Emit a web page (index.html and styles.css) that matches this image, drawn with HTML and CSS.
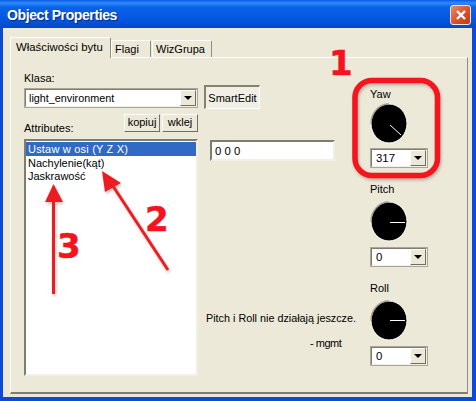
FILE: index.html
```html
<!DOCTYPE html>
<html lang="en">
<head>
  <meta charset="UTF-8" />
  <title>Object Properties</title>
  <link rel="stylesheet" href="styles.css">
</head>
<body>
  <div class="window">
    <div class="titlebar">
      <span class="title">Object Properties</span>
      <span class="close">
        <svg width="12" height="12" viewBox="0 0 12 12"><path d="M2 2 L10 10 M10 2 L2 10" stroke="#fff" stroke-width="2.4" fill="none"/></svg>
      </span>
    </div>

    <div class="client">
      <div class="tabs">
        <div class="tab active">Właściwości bytu</div>
        <div class="tab tab-flagi">Flagi</div>
        <div class="tab tab-wiz">WizGrupa</div>
      </div>

      <div class="panel">
        <div class="main">
          <div class="label klasa">Klasa:</div>
          <div class="class-row">
            <div class="combo combo-class">
              <span class="combo-value">light_environment</span>
              <span class="combo-btn"><i class="arrow"></i></span>
            </div>
            <div class="smart">SmartEdit</div>
          </div>

          <div class="attrs">
            <div class="attrs-left">
              <div class="attrs-head">
                <span class="label">Attributes:</span>
                <span class="buttons">
                  <span class="btn">kopiuj</span>
                  <span class="btn">wklej</span>
                </span>
              </div>
              <div class="list">
                <div class="row selected">Ustaw w osi (Y Z X)</div>
                <div class="row">Nachylenie(kąt)</div>
                <div class="row">Jaskrawość</div>
              </div>
            </div>
            <div class="attrs-right">
              <div class="value">0 0 0</div>
              <div class="note">Pitch i Roll nie działają jeszcze.</div>
              <div class="sign">- mgmt</div>
            </div>
          </div>
        </div>

        <div class="dials">
          <div class="dial-group yaw">
            <div class="label">Yaw</div>
            <svg class="dial" width="38" height="41" viewBox="0 0 38 41">
              <ellipse cx="19" cy="20.5" rx="18" ry="19.5" fill="#000" stroke="#fff" stroke-width="1"/>
              <path d="M1 20.5 A18 19.5 0 0 1 19 1" fill="none" stroke="#9d9a8c" stroke-width="1.4"/>
              <path d="M20 22 L31 32" stroke="#fff"/>
            </svg>
            <div class="combo combo-dial">
              <span class="combo-value">317</span>
              <span class="combo-btn"><i class="arrow"></i></span>
            </div>
          </div>
          <div class="dial-group">
            <div class="label">Pitch</div>
            <svg class="dial" width="38" height="41" viewBox="0 0 38 41">
              <ellipse cx="19" cy="20.5" rx="18" ry="19.5" fill="#000" stroke="#fff" stroke-width="1"/>
              <path d="M1 20.5 A18 19.5 0 0 1 19 1" fill="none" stroke="#9d9a8c" stroke-width="1.4"/>
              <path d="M20 21.5 L35 21.5" stroke="#fff"/>
            </svg>
            <div class="combo combo-dial">
              <span class="combo-value">0</span>
              <span class="combo-btn"><i class="arrow"></i></span>
            </div>
          </div>
          <div class="dial-group">
            <div class="label">Roll</div>
            <svg class="dial" width="38" height="41" viewBox="0 0 38 41">
              <ellipse cx="19" cy="20.5" rx="18" ry="19.5" fill="#000" stroke="#fff" stroke-width="1"/>
              <path d="M1 20.5 A18 19.5 0 0 1 19 1" fill="none" stroke="#9d9a8c" stroke-width="1.4"/>
              <path d="M20 20.5 L35 20.5" stroke="#fff"/>
            </svg>
            <div class="combo combo-dial">
              <span class="combo-value">0</span>
              <span class="combo-btn"><i class="arrow"></i></span>
            </div>
          </div>
        </div>
      </div>
    </div>
  </div>

  <!-- red annotations drawn over the dialog -->
  <svg class="marks" width="476" height="401" viewBox="0 0 476 401">
    <defs>
      <filter id="soft" x="-20%" y="-20%" width="150%" height="150%">
        <feDropShadow dx="1" dy="2" stdDeviation="1.5" flood-color="#000" flood-opacity="0.25"/>
      </filter>
    </defs>
    <g filter="url(#soft)">
      <rect x="355" y="80.5" width="82.5" height="95" rx="17" fill="none" stroke="#f3141e" stroke-width="5.5"/>
      <path d="M168 270 L111 183" stroke="#ec1c24" stroke-width="3" fill="none"/>
      <path d="M102 171 L121 183 L105 192 Z" fill="#ec1c24"/>
      <path d="M53.5 294 L53.5 200" stroke="#ec1c24" stroke-width="3" fill="none"/>
      <path d="M53.5 184 L63 202 L45 202 Z" fill="#ec1c24"/>
    </g>
  </svg>
  <span class="num num-1">1</span>
  <span class="num num-2">2</span>
  <span class="num num-3">3</span>
</body>
</html>
```

FILE: styles.css
```css
body {
  margin: 0;
  padding: 0;
  font-family: "Liberation Sans", Arial, sans-serif;
  font-size: 11px;
  color: #000;
  overflow: hidden;
}

.window {
  width: 476px;
  height: 401px;
  box-sizing: border-box;
  display: flex;
  flex-direction: column;
  background: #0a4bd8;
  padding: 0 4px 4px 3px;
}

/* Title bar */
.titlebar {
  height: 28px;
  flex: none;
  box-sizing: border-box;
  margin: 0 -4px 0 -3px;
  padding: 1px 5px 0 7px;
  display: flex;
  align-items: center;
  justify-content: space-between;
  background: linear-gradient(to bottom, #0a5ae6 0, #2f8cf8 3px, #0a62e8 7px, #0355e0 20px, #0348c8 28px);
}
.title {
  color: #fff;
  font-weight: bold;
  font-size: 14px;
  letter-spacing: -0.4px;
  text-shadow: 1px 1px 1px #0a2a80;
}
.close {
  width: 21px;
  height: 20px;
  box-sizing: border-box;
  border: 1px solid #f0e8e0;
  border-radius: 3px;
  background: linear-gradient(135deg, #e88a68, #d8502c 55%, #c03a18);
  display: flex;
  align-items: center;
  justify-content: center;
}

/* Dialog body */
.client {
  flex: 1;
  background: #ece9d8;
  padding: 9px 4px 3px 7px;
  display: flex;
  flex-direction: column;
  min-height: 0;
}

/* Tabs */
.tabs {
  display: flex;
  align-items: flex-end;
  height: 20px;
  flex: none;
  position: relative;
  z-index: 1;
}
.tab {
  box-sizing: border-box;
  height: 17px;
  background: #ece9d8;
  border: 1px solid #fff;
  border-bottom: none;
  border-right: 1px solid #8f8d80;
  border-radius: 2px 2px 0 0;
  padding: 2px 0 0 3px;
  font-size: 11px;
}
.tab.active {
  height: 21px;
  width: 101px;
  margin-bottom: -1px;
  padding: 3px 0 0 5px;
  font-size: 11.4px;
}
.tab-flagi {
  width: 40px;
}
.tab-wiz {
  width: 60px;
  margin-left: 1px;
}

.panel {
  flex: 1;
  min-height: 0;
  box-sizing: border-box;
  border: 1px solid #fff;
  border-right: 1px solid #8f8d80;
  border-bottom: 2px solid #7f7d70;
  display: flex;
  padding: 0 0 0 13px;
}

.label {
  font-size: 11px;
  line-height: 13px;
}

/* Left and middle area */
.main {
  width: 345px;
  display: flex;
  flex-direction: column;
}
.klasa {
  margin-top: 14px;
}
.class-row {
  display: flex;
  margin-top: 3px;
  gap: 6px;
  align-items: flex-start;
}

.combo {
  box-sizing: border-box;
  display: flex;
  align-items: center;
  justify-content: space-between;
  background: #fff;
  border: 2px solid;
  border-color: #7f7d70 #f2f0e6 #f2f0e6 #7f7d70;
  outline: 1px solid #a8a698;
  outline-offset: -1px;
}
.combo-class {
  width: 174px;
  height: 20px;
}
.combo-value {
  padding-left: 3px;
  font-size: 10.8px;
}
.combo-dial .combo-value {
  padding-left: 4px;
  font-size: 11.4px;
}
.combo-btn {
  width: 16px;
  height: 16px;
  background: #ece9d8;
  border: 1px solid;
  border-color: #fff #716f64 #716f64 #fff;
  box-sizing: border-box;
  display: flex;
  align-items: center;
  justify-content: center;
}
.arrow {
  width: 0;
  height: 0;
  border-left: 4px solid transparent;
  border-right: 4px solid transparent;
  border-top: 4px solid #000;
}

.smart {
  box-sizing: border-box;
  width: 56px;
  height: 24px;
  margin-top: -3px;
  border: 1px solid #fff;
  border-top: 2px solid #85836f;
  border-left: 2px solid #85836f;
  background: #f1efe5;
  display: flex;
  align-items: center;
  justify-content: center;
  font-size: 11px;
}

.attrs {
  flex: 1;
  display: flex;
  gap: 12px;
  min-height: 0;
}
.attrs-left {
  width: 174px;
  flex: none;
}
.attrs-head {
  height: 30px;
  display: flex;
  justify-content: space-between;
}
.attrs-head .label {
  margin-top: 13px;
}
.buttons {
  display: flex;
  gap: 2px;
  margin-top: 5px;
  height: 18px;
}
.btn {
  box-sizing: border-box;
  width: 36px;
  height: 18px;
  background: #ece9d8;
  border: 1px solid;
  border-color: #fff #716f64 #716f64 #fff;
  text-align: center;
  line-height: 14px;
  font-size: 11px;
}

.list {
  box-sizing: border-box;
  height: 237px;
  background: #fff;
  border: 2px solid;
  border-color: #7f7d70 #f2f0e6 #f2f0e6 #7f7d70;
  padding: 1px 0;
}
.row {
  height: 13.5px;
  line-height: 14px;
  padding-left: 2px;
  font-size: 11px;
}
.row.selected {
  background: #316ac5;
  color: #fff;
  letter-spacing: 0.2px;
}

.attrs-right {
  flex: 1;
  display: flex;
  flex-direction: column;
}
.value {
  box-sizing: border-box;
  width: 125px;
  height: 21px;
  margin-top: 31px;
  background: #fff;
  border: 2px solid;
  border-color: #7f7d70 #f2f0e6 #f2f0e6 #7f7d70;
  padding: 3px 0 0 3px;
  font-size: 11.4px;
  white-space: nowrap;
}
.note {
  margin-top: 151px;
  margin-left: -4px;
  white-space: nowrap;
  font-size: 10.8px;
  line-height: 13px;
}
.sign {
  margin-top: 12px;
  margin-left: 100px;
  white-space: nowrap;
  font-size: 11px;
  line-height: 13px;
  letter-spacing: -0.5px;
}

/* Dial column */
.dials {
  margin-left: 1px;
  padding-top: 30px;
  display: flex;
  flex-direction: column;
  gap: 15px;
}
.dial-group {
  width: 60px;
}
.dial {
  display: block;
  margin-top: 5px;
}
.yaw .dial {
  margin-top: 2px;
}
.combo-dial {
  width: 58px;
  height: 20px;
  margin-top: 5px;
}
.yaw .combo-dial {
  margin-top: 4px;
}

/* Annotations */
.marks {
  position: absolute;
  left: 0;
  top: 0;
}
.num {
  position: absolute;
  color: #f3141e;
  font-family: "DejaVu Sans", sans-serif;
  font-weight: bold;
  font-size: 34px;
  line-height: 1;
  -webkit-text-stroke: 0.5px #f3141e;
}
.num-1 {
  left: 329px;
  top: 46px;
}
.num-2 {
  left: 145px;
  top: 202px;
}
.num-3 {
  left: 57px;
  top: 229px;
}
```
